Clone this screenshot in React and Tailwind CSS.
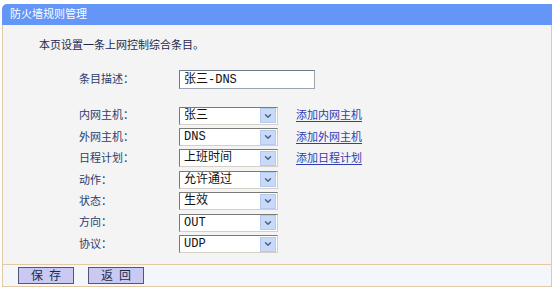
import { ChevronDown } from 'lucide-react';

const font = { fontFamily: '"Liberation Sans", "Noto Sans CJK SC", sans-serif' };
const mono = { fontFamily: '"Liberation Mono", "Noto Sans CJK SC", monospace' };

function Select({ value }) {
  return (
    <div className="w-[99px] h-[18px] bg-white border border-t-[#7a7a7a] border-l-[#7a7a7a] border-r-[#d4d0c8] border-b-[#d4d0c8] flex items-center">
      <span className="flex-1 pl-[4px] text-[12px] leading-none text-[#111]" style={mono}>{value}</span>
      <span className="w-[16px] h-[15px] mr-[1px] bg-[#c8daf7] border border-[#b5c9ee] flex items-center justify-center">
        <ChevronDown className="w-[10px] h-[10px] text-[#4d6185]" strokeWidth={3.5} />
      </span>
    </div>
  );
}

function Row({ label, value, link }) {
  return (
    <div className="flex items-center h-[21.4px]">
      <span className="w-[100px] text-[11px] text-[#2a3d6e]">{label}</span>
      <Select value={value} />
      {link && (
        <a className="ml-[18px] text-[11px] text-[#2f3cb4] underline underline-offset-2">{link}</a>
      )}
    </div>
  );
}

export default function App() {
  const rows = [
    { label: '内网主机：', value: '张三', link: '添加内网主机' },
    { label: '外网主机：', value: 'DNS', link: '添加外网主机' },
    { label: '日程计划：', value: '上班时间', link: '添加日程计划' },
    { label: '动作：', value: '允许通过' },
    { label: '状态：', value: '生效' },
    { label: '方向：', value: 'OUT' },
    { label: '协议：', value: 'UDP' },
  ];

  return (
    <div className="w-[554px] h-[289px] bg-white pt-[4px] pl-[2px]" style={font}>
      <div className="w-[550px] h-[283px] flex flex-col border-b border-[#e3c9a6]">
        <div className="h-[21px] bg-[#6396f7] rounded-tl-[5px] flex items-center pl-[8px] text-white text-[11px]">
          防火墙规则管理
        </div>
        <div className="flex-1 bg-[#f4f4f4] border-x border-[#e3c9a6] flex flex-col">
          <div className="pl-[36px] pt-[12px] text-[11px] text-[#1c2a4f] leading-[16px]">本页设置一条上网控制综合条目。</div>
          <div className="pl-[76px] pt-[17px] flex items-center">
            <span className="w-[100px] text-[11px] text-[#2a3d6e]">条目描述：</span>
            <div className="w-[136px] h-[19px] bg-white border border-t-[#6f7a8c] border-l-[#6f7a8c] border-r-[#9aa3b3] border-b-[#9aa3b3] flex items-center pl-[4px] text-[12px] text-[#111]" style={mono}>
              张三-DNS
            </div>
          </div>
          <div className="pl-[76px] pt-[16px] flex flex-col">
            {rows.map((r) => (
              <Row key={r.label} {...r} />
            ))}
          </div>
        </div>
        <div className="h-[22px] bg-[#f3f6fb] border-x border-t border-[#e3c9a6] flex items-center pl-[15px] gap-[14px]">
          <button className="w-[56px] h-[17px] bg-[#c9c9f2] border border-[#55557a] text-[12px] leading-none text-[#1c2a4f] tracking-[6px] pl-[6px]">保存</button>
          <button className="w-[56px] h-[17px] bg-[#c9c9f2] border border-[#55557a] text-[12px] leading-none text-[#1c2a4f] tracking-[6px] pl-[6px]">返回</button>
        </div>
      </div>
    </div>
  );
}
